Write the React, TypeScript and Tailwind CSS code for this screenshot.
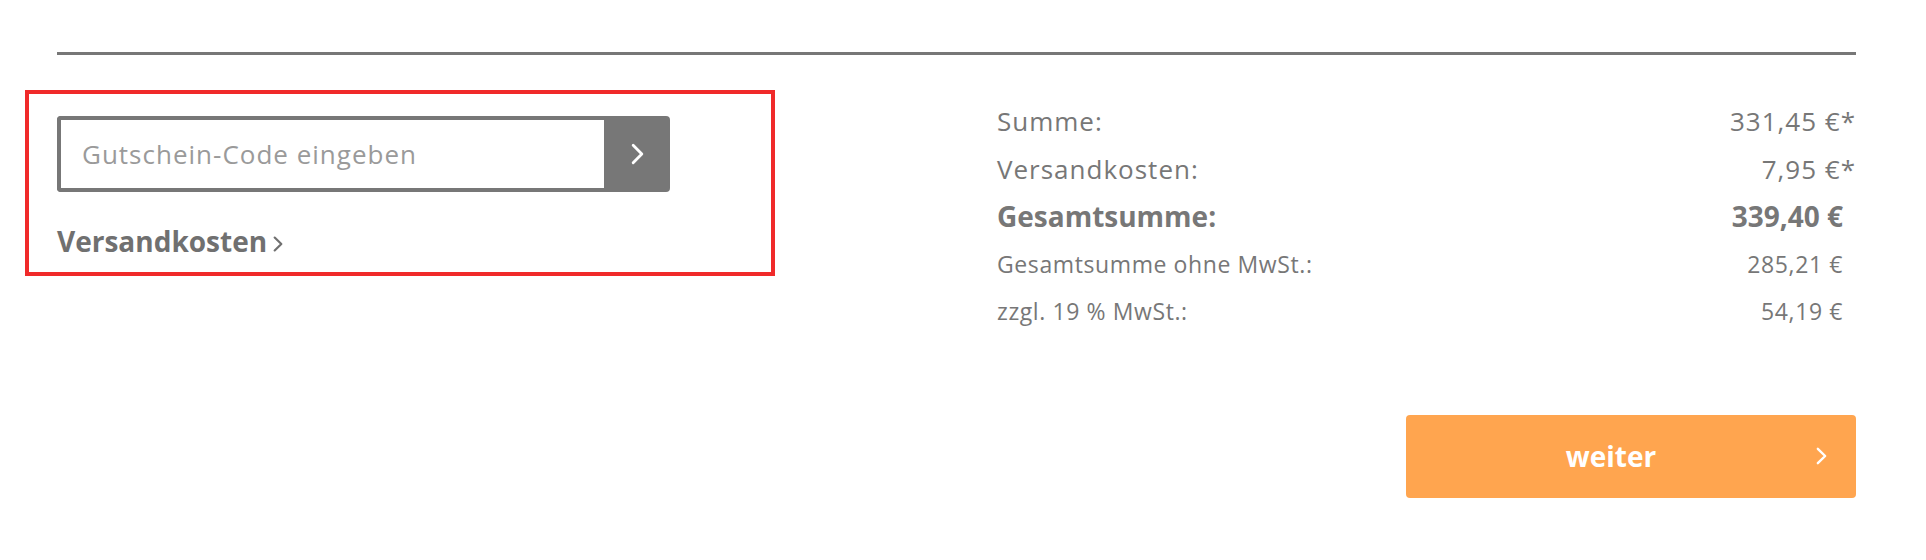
const Chevron = ({ className }: { className?: string }) => (
  <svg viewBox="0 0 12 20" fill="none" className={className} preserveAspectRatio="none">
    <path d="M2 2l8 8-8 8" stroke="currentColor" strokeWidth="2.6" strokeLinecap="round" strokeLinejoin="round" />
  </svg>
);

const rows = [
  { label: "Summe:", value: "331,45 €*", style: "text-[26px] font-normal tracking-[1px]", pad: "" },
  { label: "Versandkosten:", value: "7,95 €*", style: "text-[26px] font-normal tracking-[1px]", pad: "" },
  { label: "Gesamtsumme:", value: "339,40 €", style: "text-[28px] font-bold", pad: "pr-[13px]" },
  { label: "Gesamtsumme ohne MwSt.:", value: "285,21 €", style: "text-[23px] font-normal tracking-[0.6px]", pad: "pr-[13px]" },
  { label: "zzgl. 19 % MwSt.:", value: "54,19 €", style: "text-[23px] font-normal tracking-[0.6px]", pad: "pr-[13px]" },
];

export default function App() {
  return (
    <div className="h-[560px] w-full bg-white font-['Open_Sans',sans-serif] text-[#777]">
      <div className="ml-[57px] w-[1799px] pt-[52px]">
        <div className="h-[3px] bg-[#777]" />

        <div className="mt-[35px] flex items-start">
          {/* voucher */}
          <div className="-ml-[32px] h-[186px] w-[750px] border-4 border-[#f02a2a] pl-[28px] pt-[22px]">
            <div className="flex h-[76px] w-[613px]">
              <input
                type="text"
                placeholder="Gutschein-Code eingeben"
                className="min-w-0 flex-1 rounded-l-[4px] border-4 border-r-0 border-[#777] bg-white px-[21px] text-[26px] tracking-[1px] text-[#555] outline-none placeholder:text-[#9a9a9a]"
              />
              <button type="button" className="flex w-[66px] items-center justify-center rounded-r-[4px] bg-[#777] text-white">
                <Chevron className="h-[22px] w-[13px]" />
              </button>
            </div>
            <a href="#" className="mt-[30px] inline-flex items-center gap-[6px] text-[28px] font-bold leading-[1.4] text-[#707070]">
              Versandkosten
              <Chevron className="mt-[4px] h-[16px] w-[10px]" />
            </a>
          </div>

          {/* totals */}
          <div className="ml-auto w-[859px] pt-[8px]">
            {rows.map((r) => (
              <div key={r.label} className={`flex h-[47.5px] items-center justify-between leading-[47.5px] ${r.style}`}>
                <span>{r.label}</span>
                <span className={r.pad}>{r.value}</span>
              </div>
            ))}
            <div className="mt-[79px] flex justify-end">
              <button type="button" className="flex h-[83px] w-[450px] items-center rounded-[4px] bg-[#ffa54f] text-white">
                <span className="flex-1 text-center text-[28px] font-bold">weiter</span>
                <Chevron className="mr-[29px] h-[18px] w-[11px]" />
              </button>
            </div>
          </div>
        </div>
      </div>
    </div>
  );
}
